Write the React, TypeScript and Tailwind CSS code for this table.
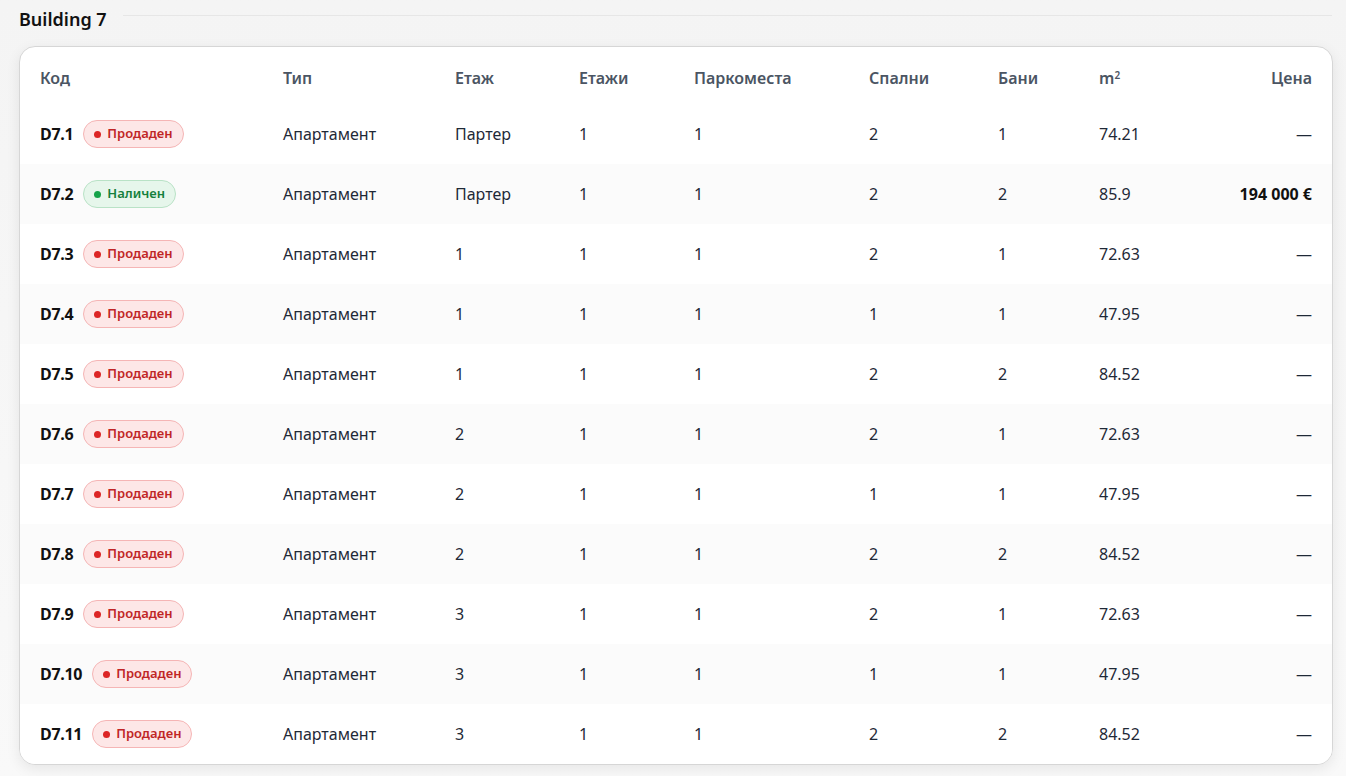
type Unit = {
  code: string;
  sold: boolean;
  floor: string;
  floors: number;
  parking: number;
  beds: number;
  baths: number;
  area: string;
  price?: string;
};

const units: Unit[] = [
  { code: 'D7.1', sold: true, floor: 'Партер', floors: 1, parking: 1, beds: 2, baths: 1, area: '74.21' },
  { code: 'D7.2', sold: false, floor: 'Партер', floors: 1, parking: 1, beds: 2, baths: 2, area: '85.9', price: '194 000 €' },
  { code: 'D7.3', sold: true, floor: '1', floors: 1, parking: 1, beds: 2, baths: 1, area: '72.63' },
  { code: 'D7.4', sold: true, floor: '1', floors: 1, parking: 1, beds: 1, baths: 1, area: '47.95' },
  { code: 'D7.5', sold: true, floor: '1', floors: 1, parking: 1, beds: 2, baths: 2, area: '84.52' },
  { code: 'D7.6', sold: true, floor: '2', floors: 1, parking: 1, beds: 2, baths: 1, area: '72.63' },
  { code: 'D7.7', sold: true, floor: '2', floors: 1, parking: 1, beds: 1, baths: 1, area: '47.95' },
  { code: 'D7.8', sold: true, floor: '2', floors: 1, parking: 1, beds: 2, baths: 2, area: '84.52' },
  { code: 'D7.9', sold: true, floor: '3', floors: 1, parking: 1, beds: 2, baths: 1, area: '72.63' },
  { code: 'D7.10', sold: true, floor: '3', floors: 1, parking: 1, beds: 1, baths: 1, area: '47.95' },
  { code: 'D7.11', sold: true, floor: '3', floors: 1, parking: 1, beds: 2, baths: 2, area: '84.52' },
];

const cols = 'grid grid-cols-[243px_172px_124px_115px_175px_129px_101px_1fr] items-center';

function StatusBadge({ sold }: { sold: boolean }) {
  if (sold) {
    return (
      <span className="inline-flex h-[28px] items-center gap-1.5 rounded-full border border-[#f5b5b5] bg-[#fde7e7] px-2.5 text-[13px] font-semibold text-[#c02626]">
        <span className="h-[7px] w-[7px] rounded-full bg-[#dc2626]" />
        Продаден
      </span>
    );
  }
  return (
    <span className="inline-flex h-[28px] items-center gap-1.5 rounded-full border border-[#b9e2c6] bg-[#e6f6eb] px-2.5 text-[13px] font-semibold text-[#15803d]">
      <span className="h-[7px] w-[7px] rounded-full bg-[#16a34a]" />
      Наличен
    </span>
  );
}

export default function App() {
  return (
    <div
      className="min-h-screen bg-gradient-to-b from-[#f4f4f4] to-[#f9f9f9] px-[19px] pt-[5px] pb-3"
      style={{ fontFamily: '"Noto Sans", "Open Sans", sans-serif' }}
    >
      <div className="flex items-start gap-4">
        <h2 className="text-[18px] leading-7 font-semibold text-[#111]">Building 7</h2>
        <div className="mt-[10px] mr-[-5px] h-px flex-1 bg-[#e6e6e6]" />
      </div>

      <div className="mt-[13px] w-[1314px] overflow-hidden rounded-2xl border border-[#d6d6d6] bg-white shadow-[0_4px_14px_rgba(0,0,0,0.08)]">
        <div className={`${cols} h-[57px] px-5 pt-[4px] text-[16px] font-semibold text-[#4b5563]`}>
          <div>Код</div>
          <div>Тип</div>
          <div>Етаж</div>
          <div>Етажи</div>
          <div>Паркоместа</div>
          <div>Спални</div>
          <div>Бани</div>
          <div className="flex justify-between">
            <span>
              m<sup className="text-[10px]">2</sup>
            </span>
            <span>Цена</span>
          </div>
        </div>

        {units.map((u, i) => (
          <div
            key={u.code}
            className={`${cols} h-[60px] px-5 text-[16px] text-[#1f2937] ${i % 2 === 1 ? 'bg-[#fbfbfb]' : 'bg-white'}`}
          >
            <div className="flex items-center gap-2.5">
              <span className="text-[16px] font-bold tracking-[-0.3px] text-[#111]">{u.code}</span>
              <StatusBadge sold={u.sold} />
            </div>
            <div>Апартамент</div>
            <div>{u.floor}</div>
            <div>{u.floors}</div>
            <div>{u.parking}</div>
            <div>{u.beds}</div>
            <div>{u.baths}</div>
            <div className="flex justify-between">
              <span>{u.area}</span>
              {u.price ? <span className="font-bold text-[#111]">{u.price}</span> : <span>—</span>}
            </div>
          </div>
        ))}
      </div>
    </div>
  );
}
